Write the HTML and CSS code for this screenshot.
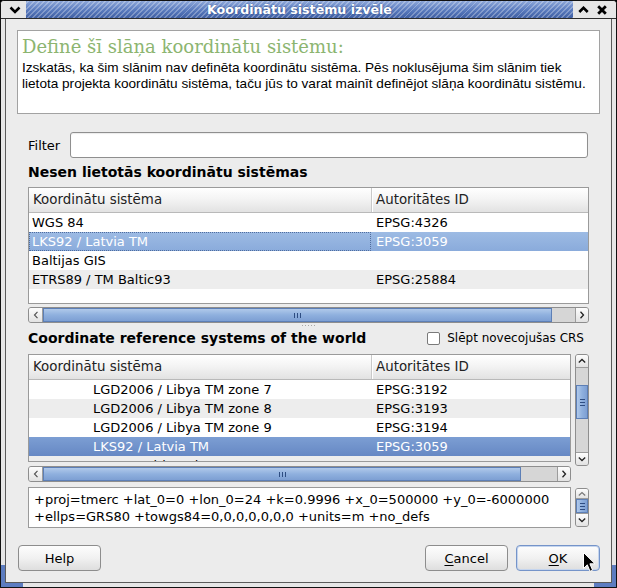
FILE: index.html
```html
<!DOCTYPE html>
<html lang="lv">
<head>
    <meta charset="UTF-8">
    <title>Koordinātu sistēmu izvēle</title>
    <link rel="stylesheet" href="styles.css">
</head>
<body>
<div class="window">
    <div class="titlebar">
        <div class="tb-btn tb-menu">
            <svg width="12" height="8" viewBox="0 0 12 8"><polyline points="1.5,1.5 6,6 10.5,1.5" fill="none" stroke="#000" stroke-width="2.6"/></svg>
        </div>
        <div class="tb-caption">Koordinātu sistēmu izvēle</div>
        <div class="tb-btn tb-max">
            <svg width="11" height="7" viewBox="0 0 11 7"><polyline points="1.3,6 5.5,1.8 9.7,6" fill="none" stroke="#000" stroke-width="2.6"/></svg>
        </div>
        <div class="tb-btn tb-close">
            <svg width="10" height="10" viewBox="0 0 10 10"><path d="M1.2 1.2 L8.8 8.8 M8.8 1.2 L1.2 8.8" stroke="#000" stroke-width="2.8"/></svg>
        </div>
        <div class="tb-end"></div>
    </div>

    <div class="frame">
        <div class="dialog">
            <div class="intro">
                <h1>Definē šī slāņa koordinātu sistēmu:</h1>
                <p>Izskatās, ka šim slānim nav definēta koordinātu sistēma. Pēs noklusējuma šim slānim tiek<br>lietota projekta koordinātu sistēma, taču jūs to varat mainīt definējot slāņa koordinātu sistēmu.</p>
            </div>

            <div class="main">
                <div class="filter-row">
                    <label class="filter-label">Filter</label>
                    <input class="filter" type="text">
                </div>

                <h2 class="section">Nesen lietotās koordinātu sistēmas</h2>
                <div class="table recent">
                    <div class="thead">
                        <div class="th th-name">Koordinātu sistēma</div>
                        <div class="th th-id">Autoritātes ID</div>
                    </div>
                    <div class="row"><div class="td td-name">WGS 84</div><div class="td td-id">EPSG:4326</div></div>
                    <div class="row selected focus"><div class="td td-name">LKS92 / Latvia TM</div><div class="td td-id">EPSG:3059</div></div>
                    <div class="row"><div class="td td-name">Baltijas GIS</div><div class="td td-id"></div></div>
                    <div class="row alt"><div class="td td-name">ETRS89 / TM Baltic93</div><div class="td td-id">EPSG:25884</div></div>
                </div>
                <div class="hscroll wide">
                    <div class="sb-btn sb-left"><svg width="6" height="8" viewBox="0 0 6 8"><polyline points="4.5,0.8 1.5,4 4.5,7.2" fill="none" stroke="#555" stroke-width="1.2"/></svg></div>
                    <div class="sb-handle h-recent"><svg width="7" height="5" viewBox="0 0 7 5"><path d="M0.5 0V5M3.5 0V5M6.5 0V5" stroke="#2e4d82" stroke-width="1"/></svg></div>
                    <div class="sb-groove"></div>
                    <div class="sb-btn sb-right"><svg width="6" height="8" viewBox="0 0 6 8"><polyline points="1.5,0.8 4.5,4 1.5,7.2" fill="none" stroke="#222" stroke-width="1.3"/></svg></div>
                </div>

                <div class="splitter"><span class="grip"></span></div>

                <div class="world-head">
                    <h2 class="section">Coordinate reference systems of the world</h2>
                    <label class="check"><span class="check-box"></span>Slēpt novecojušas CRS</label>
                </div>

                <div class="world">
                    <div class="world-left">
                        <div class="table tree">
                            <div class="thead">
                                <div class="th th-name">Koordinātu sistēma</div>
                                <div class="th th-id">Autoritātes ID</div>
                            </div>
                            <div class="row"><div class="td td-name">LGD2006 / Libya TM zone 7</div><div class="td td-id">EPSG:3192</div></div>
                            <div class="row alt"><div class="td td-name">LGD2006 / Libya TM zone 8</div><div class="td td-id">EPSG:3193</div></div>
                            <div class="row"><div class="td td-name">LGD2006 / Libya TM zone 9</div><div class="td td-id">EPSG:3194</div></div>
                            <div class="row selected active"><div class="td td-name">LKS92 / Latvia TM</div><div class="td td-id">EPSG:3059</div></div>
                            <div class="row alt"><div class="td td-name">LKS94 / Lithuania TM</div><div class="td td-id">EPSG:3346</div></div>
                        </div>
                        <div class="hscroll">
                            <div class="sb-btn sb-left"><svg width="6" height="8" viewBox="0 0 6 8"><polyline points="4.5,0.8 1.5,4 4.5,7.2" fill="none" stroke="#555" stroke-width="1.2"/></svg></div>
                            <div class="sb-handle h-world"><svg width="7" height="5" viewBox="0 0 7 5"><path d="M0.5 0V5M3.5 0V5M6.5 0V5" stroke="#2e4d82" stroke-width="1"/></svg></div>
                            <div class="sb-groove"></div>
                            <div class="sb-btn sb-right"><svg width="6" height="8" viewBox="0 0 6 8"><polyline points="1.5,0.8 4.5,4 1.5,7.2" fill="none" stroke="#222" stroke-width="1.3"/></svg></div>
                        </div>
                    </div>
                    <div class="vscroll tall">
                        <div class="sb-btn sb-up"><svg width="8" height="6" viewBox="0 0 8 6"><polyline points="0.8,4.5 4,1.5 7.2,4.5" fill="none" stroke="#222" stroke-width="1.3"/></svg></div>
                        <div class="sb-groove g-top"></div>
                        <div class="sb-handle v-world"><svg width="5" height="7" viewBox="0 0 5 7"><path d="M0 0.5H5M0 3.5H5M0 6.5H5" stroke="#2e4d82" stroke-width="1"/></svg></div>
                        <div class="sb-groove"></div>
                        <div class="sb-btn sb-down"><svg width="8" height="6" viewBox="0 0 8 6"><polyline points="0.8,1.5 4,4.5 7.2,1.5" fill="none" stroke="#222" stroke-width="1.3"/></svg></div>
                    </div>
                </div>

                <div class="proj-row">
                    <div class="proj">+proj=tmerc +lat_0=0 +lon_0=24 +k=0.9996 +x_0=500000 +y_0=-6000000<br>+ellps=GRS80 +towgs84=0,0,0,0,0,0,0 +units=m +no_defs</div>
                    <div class="vscroll short">
                        <div class="sb-btn sb-up"><svg width="8" height="6" viewBox="0 0 8 6"><polyline points="0.8,4.5 4,1.5 7.2,4.5" fill="none" stroke="#777" stroke-width="1.2"/></svg></div>
                        <div class="sb-handle v-proj"><svg width="5" height="7" viewBox="0 0 5 7"><path d="M0 0.5H5M0 3.5H5M0 6.5H5" stroke="#2e4d82" stroke-width="1"/></svg></div>
                        <div class="sb-btn sb-down"><svg width="8" height="6" viewBox="0 0 8 6"><polyline points="0.8,1.5 4,4.5 7.2,1.5" fill="none" stroke="#222" stroke-width="1.3"/></svg></div>
                    </div>
                </div>
            </div>

            <div class="buttons">
                <button class="btn">Help</button>
                <span class="spacer"></span>
                <button class="btn"><u>C</u>ancel</button>
                <button class="btn default"><u>O</u>K</button>
            </div>
        </div>
    </div>

    <!-- resize grips light up in the bottom corners -->
    <div class="grip-corner grip-left"></div>
    <div class="grip-corner grip-right"></div>

    <svg class="cursor" width="13" height="21" viewBox="0 0 13 21">
        <path d="M0.5 0.5 L0.5 16.5 L4.3 12.8 L7 19.3 L9.6 18.2 L6.9 11.8 L12 11.8 Z" fill="#000" stroke="#fff" stroke-width="1"/>
    </svg>
</div>
</body>
</html>
```

FILE: styles.css
```css
* {
    box-sizing: border-box;
}
body {
    margin: 0;
    background: #000;
    font-family: "DejaVu Sans", sans-serif;
    font-size: 13px;
    color: #000;
}

/* window decoration */
.window {
    position: relative;
    width: 617px;
    height: 588px;
    display: flex;
    flex-direction: column;
    border: 1px solid #111;
    border-radius: 4px 4px 0 0;
    background: #e6e6e6;
    overflow: hidden;
}
.titlebar {
    display: flex;
    height: 18px;
    border-bottom: 1px solid #2c2c2c;
    background: #e6e6e6;
}
.tb-btn {
    display: flex;
    align-items: center;
    justify-content: center;
}
.tb-menu {
    width: 25px;
    padding-left: 3px;
}
.tb-caption {
    flex: 1;
    text-align: center;
    color: #fff;
    font-weight: bold;
    font-size: 12.6px;
    line-height: 17px;
    text-shadow: 0 0 2px #2b4683;
    background:
        repeating-linear-gradient(-45deg, rgba(255, 255, 255, 0.28) 0 1.4px, rgba(255, 255, 255, 0) 1.4px 3.6px),
        linear-gradient(#8ea8da, #5c7dc0 50%, #3f5fa4);
}
.tb-max {
    width: 20px;
}
.tb-close {
    width: 18px;
}
.tb-end {
    width: 5px;
}
.frame {
    flex: 1;
    padding: 0 4px 4px;
    display: flex;
}
.dialog {
    flex: 1;
    display: flex;
    flex-direction: column;
    border: 1px solid #5a5a5a;
    border-top: none;
    background: #ececec;
    padding: 11px;
}

/* info box on top */
.intro {
    height: 84px;
    background: #fff;
    border: 1px solid #a2a2a2;
    padding: 4px 4px 0;
}
.intro h1 {
    margin: 0;
    font-family: "DejaVu Serif", serif;
    font-weight: normal;
    font-size: 18px;
    line-height: 23px;
    color: #8cb570;
}
.intro p {
    margin: 2px 0 0;
    font-family: "Liberation Sans", Arial, sans-serif;
    font-size: 13.6px;
    line-height: 16px;
}

.main {
    display: flex;
    flex-direction: column;
    padding: 0 11px;
}
.filter-row {
    display: flex;
    align-items: center;
    margin-top: 18px;
    height: 26px;
}
.filter-label {
    width: 42px;
}
.filter {
    width: 518px;
    height: 26px;
    border: 1px solid #8f8f8f;
    border-radius: 3px;
    background: #fff;
    box-shadow: inset 0 1px 1px rgba(0, 0, 0, 0.08);
}
.section {
    margin: 0;
    font-size: 14px;
    font-weight: bold;
    line-height: 16px;
}
.main > .section {
    margin-top: 6px;
}

/* list views */
.table {
    border: 1px solid #9a9a9a;
    background: #fff;
    overflow: hidden;
}
.recent {
    margin-top: 7px;
    height: 117px;
}
.tree {
    height: 108px;
}
.thead {
    display: flex;
    height: 25px;
    border-bottom: 1px solid #b9b9b9;
    background: linear-gradient(#ffffff, #f4f4f4 45%, #e2e2e2);
    color: #222;
    font-size: 13.4px;
}
.th {
    line-height: 24px;
}
.th-name {
    width: 342px;
    padding-left: 4px;
}
.th-id {
    flex: 1;
    padding-left: 4px;
    border-left: 1px solid #c9c9c9;
    box-shadow: inset 1px 0 0 #fff;
}
.row {
    display: flex;
    height: 19px;
    line-height: 19px;
    white-space: nowrap;
}
.row.alt {
    background: #ededed;
}
.row.selected {
    color: #fff;
    background: linear-gradient(#9dbbe4, #8aabdb);
}
.row.selected.active {
    background: linear-gradient(#7c9ed3, #6688c4);
}
.row.focus .td-name {
    outline: 1px dotted #4f6d9e;
    outline-offset: -1px;
}
.td-name {
    width: 342px;
    padding-left: 3px;
}
.td-id {
    flex: 1;
    padding-left: 5px;
}
.tree .td-name {
    padding-left: 64px;
}

/* scroll bars */
.hscroll,
.vscroll {
    display: flex;
    border: 1px solid #8e8e8e;
    border-radius: 3px;
    background: #d6d6d6;
    overflow: hidden;
}
.hscroll {
    height: 16px;
}
.hscroll.wide {
    margin-top: 3px;
}
.vscroll {
    flex-direction: column;
    width: 14px;
}
.sb-btn {
    display: flex;
    align-items: center;
    justify-content: center;
    background: linear-gradient(#fdfdfd, #e2e2e2);
}
.sb-left {
    width: 14px;
    border-right: 1px solid #9c9c9c;
}
.sb-right {
    width: 13px;
    border-left: 1px solid #9c9c9c;
}
.sb-up {
    height: 13px;
    border-bottom: 1px solid #9c9c9c;
}
.sb-down {
    height: 13px;
    border-top: 1px solid #9c9c9c;
}
.sb-groove {
    flex: 1;
}
.sb-handle {
    display: flex;
    align-items: center;
    justify-content: center;
    background: linear-gradient(#b0c9ea, #8fb0de 50%, #7d9fd3);
    border: 1px solid #5d7fb6;
}
.vscroll .sb-handle {
    background: linear-gradient(90deg, #b0c9ea, #8fb0de 50%, #7d9fd3);
}
.h-recent {
    width: 509px;
}
.h-world {
    width: 478px;
}
.g-top {
    flex: 0 0 17px;
}
.v-world {
    height: 34px;
}
.v-proj {
    height: 14px;
}

.splitter {
    display: flex;
    justify-content: center;
    height: 5px;
    padding-top: 1px;
}
.grip {
    width: 16px;
    height: 4px;
    background-image: radial-gradient(circle, #a8a8a8 0 0.5px, transparent 0.7px);
    background-size: 3px 3px;
}
.world-head {
    display: flex;
    align-items: center;
    height: 20px;
}
.check {
    display: flex;
    align-items: center;
    margin-left: auto;
    margin-right: 5px;
    font-size: 12px;
}
.check-box {
    width: 13px;
    height: 13px;
    margin-right: 7px;
    border: 1px solid #7a7a7a;
    border-radius: 2px;
    background: #fff;
}
.world {
    display: flex;
    gap: 4px;
    margin-top: 6px;
}
.world-left {
    width: 543px;
    display: flex;
    flex-direction: column;
    gap: 4px;
}
.tall {
    height: 112px;
}

.proj-row {
    display: flex;
    gap: 4px;
    margin-top: 5px;
}
.proj {
    width: 543px;
    height: 41px;
    border: 1px solid #9a9a9a;
    background: #fff;
    padding: 3px 5px 0;
    line-height: 17px;
    white-space: nowrap;
}
.short {
    height: 39px;
    margin-top: 1px;
}
.short .sb-up {
    height: 12px;
    flex: 1;
}
.short .sb-down {
    height: 13px;
    flex: 0 0 13px;
}

/* dialog buttons */
.buttons {
    display: flex;
    gap: 8px;
    margin-top: 17px;
    padding-left: 1px;
}
.spacer {
    flex: 1;
}
.btn {
    width: 83px;
    height: 26px;
    font-family: "DejaVu Sans", sans-serif;
    font-size: 13px;
    color: #000;
    border: 1px solid #8d8d8d;
    border-radius: 4px;
    background: linear-gradient(#fdfdfd, #f1f1f1 50%, #dedede);
    padding: 0;
}
.btn u {
    text-underline-offset: 2px;
}
.btn.default {
    width: 84px;
    border-color: #7594c9;
    box-shadow: inset 0 0 0 1px #c5d5ee;
}

.grip-corner {
    position: absolute;
    border-color: #5c7cc0;
    border-style: solid;
}
.grip-left {
    left: 0;
    bottom: 0;
    width: 22px;
    height: 22px;
    border-width: 0 0 4px 4px;
}
.grip-right {
    right: 0;
    bottom: 0;
    width: 22px;
    height: 22px;
    border-width: 0 4px 4px 0;
}
.cursor {
    position: absolute;
    left: 582px;
    top: 551px;
}
```
